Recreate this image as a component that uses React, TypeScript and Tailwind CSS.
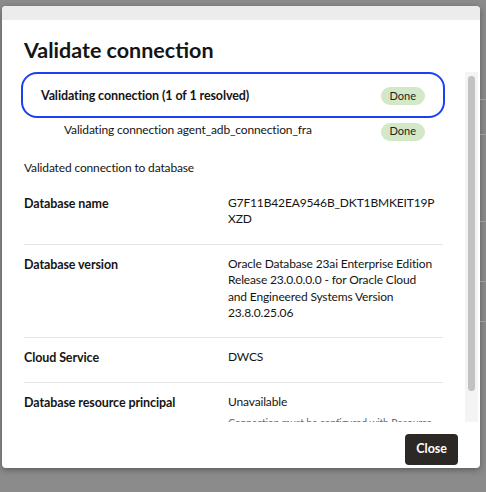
import React from "react";

const font = { fontFamily: "Lato, 'Noto Sans', sans-serif" };

type Row = { label: string; value: string[]; note?: string };

const rows: Row[] = [
  { label: "Database name", value: ["G7F11B42EA9546B_DKT1BMKEIT19P", "XZD"] },
  {
    label: "Database version",
    value: [
      "Oracle Database 23ai Enterprise Edition",
      "Release 23.0.0.0.0 - for Oracle Cloud",
      "and Engineered Systems Version",
      "23.8.0.25.06",
    ],
  },
  { label: "Cloud Service", value: ["DWCS"] },
  {
    label: "Database resource principal",
    value: ["Unavailable"],
    note: "Connection must be configured with Resource Principal",
  },
];

function DoneBadge() {
  return (
    <span className="shrink-0 rounded-full bg-[#d2e8c6] px-[9px] h-[18px] flex items-center text-[11px] text-[#1e1e1e]">
      Done
    </span>
  );
}

function DetailRow({ row, last }: { row: Row; last: boolean }) {
  return (
    <div className={`flex pt-[11px] pb-4 ${last ? "" : "border-b border-[#e4e4e4]"}`}>
      <div className="w-[204px] shrink-0 font-bold text-[12.5px] tracking-[-0.1px] leading-[17px] text-[#161513]">
        {row.label}
      </div>
      <div className="w-[215px] flex flex-col text-[12px] tracking-[-0.15px] leading-[16.4px] text-[#161513]">
        {row.value.map((line) => (
          <span key={line} className="whitespace-nowrap">
            {line}
          </span>
        ))}
        {row.note && (
          <span className="mt-[4px] text-[10.5px] tracking-[-0.2px] text-[#6b6b6b]">{row.note}</span>
        )}
      </div>
    </div>
  );
}

export default function App() {
  return (
    <div className="w-[486px] h-[492px] bg-[#8b8b8b] overflow-hidden flex items-start" style={font}>
      <div className="ml-[2px] mt-[6px] w-[478px] h-[462px] bg-white rounded-[4px] shadow-[0_2px_6px_rgba(0,0,0,0.35)] flex flex-col overflow-hidden">
        <div className="h-[14px] bg-[#ececec] shrink-0" />

        <h1 className="pl-[22px] pt-[16px] h-[52px] shrink-0 text-[21.5px] leading-[28px] font-bold text-[#161513]">
          Validate connection
        </h1>

        <div className="flex h-[350px] shrink-0">
          <div className="flex-1 overflow-hidden pl-[19px] pr-[20px]">
            <div className="w-[424px] h-[46px] rounded-[16px] border-2 border-[#1d3ff2] flex items-center justify-between pl-[18px] pr-[18px] pt-[2px]">
              <span className="font-bold text-[12.5px] tracking-[-0.1px] text-[#161513]">
                Validating connection (1 of 1 resolved)
              </span>
              <DoneBadge />
            </div>

            <div className="w-[424px] mt-[5px] flex items-center justify-between pl-[43px] pr-[20px] h-[17px]">
              <span className="text-[12px] tracking-[-0.15px] text-[#161513] -mt-[3px]">
                Validating connection agent_adb_connection_fra
              </span>
              <DoneBadge />
            </div>

            <div className="mt-[19px] pl-[3px] text-[12px] tracking-[-0.15px] leading-[17px] text-[#161513]">
              Validated connection to database
            </div>

            <div className="mt-[8px] ml-[3px] w-[419px]">
              {rows.map((row, i) => (
                <DetailRow key={row.label} row={row} last={i === rows.length - 1} />
              ))}
            </div>
          </div>

          <div className="w-[13px] shrink-0 bg-[#f4f4f4] pt-[4px] px-[3px] flex flex-col">
            <div className="h-[315px] rounded-full bg-[#c2c2c2]" />
          </div>
          <div className="w-[2px] shrink-0" />
        </div>

        <div className="flex-1 flex items-start justify-end pt-[12px] pr-[22px]">
          <button className="h-[31px] px-[11px] rounded-[4px] bg-[#2b2826] text-white font-bold text-[12.5px]">
            Close
          </button>
        </div>
      </div>

      <div className="flex-1 h-full flex flex-col">
        <div className="h-[100px] border-b border-[#9c9c9c]" />
        <div className="h-[35px] border-b border-[#9c9c9c]" />
        <div className="h-[87px] border-b border-[#9c9c9c]" />
        <div className="h-[60px] border-b border-[#9c9c9c]" />
        <div className="h-[40px] border-b border-[#9c9c9c]" />
      </div>
    </div>
  );
}
